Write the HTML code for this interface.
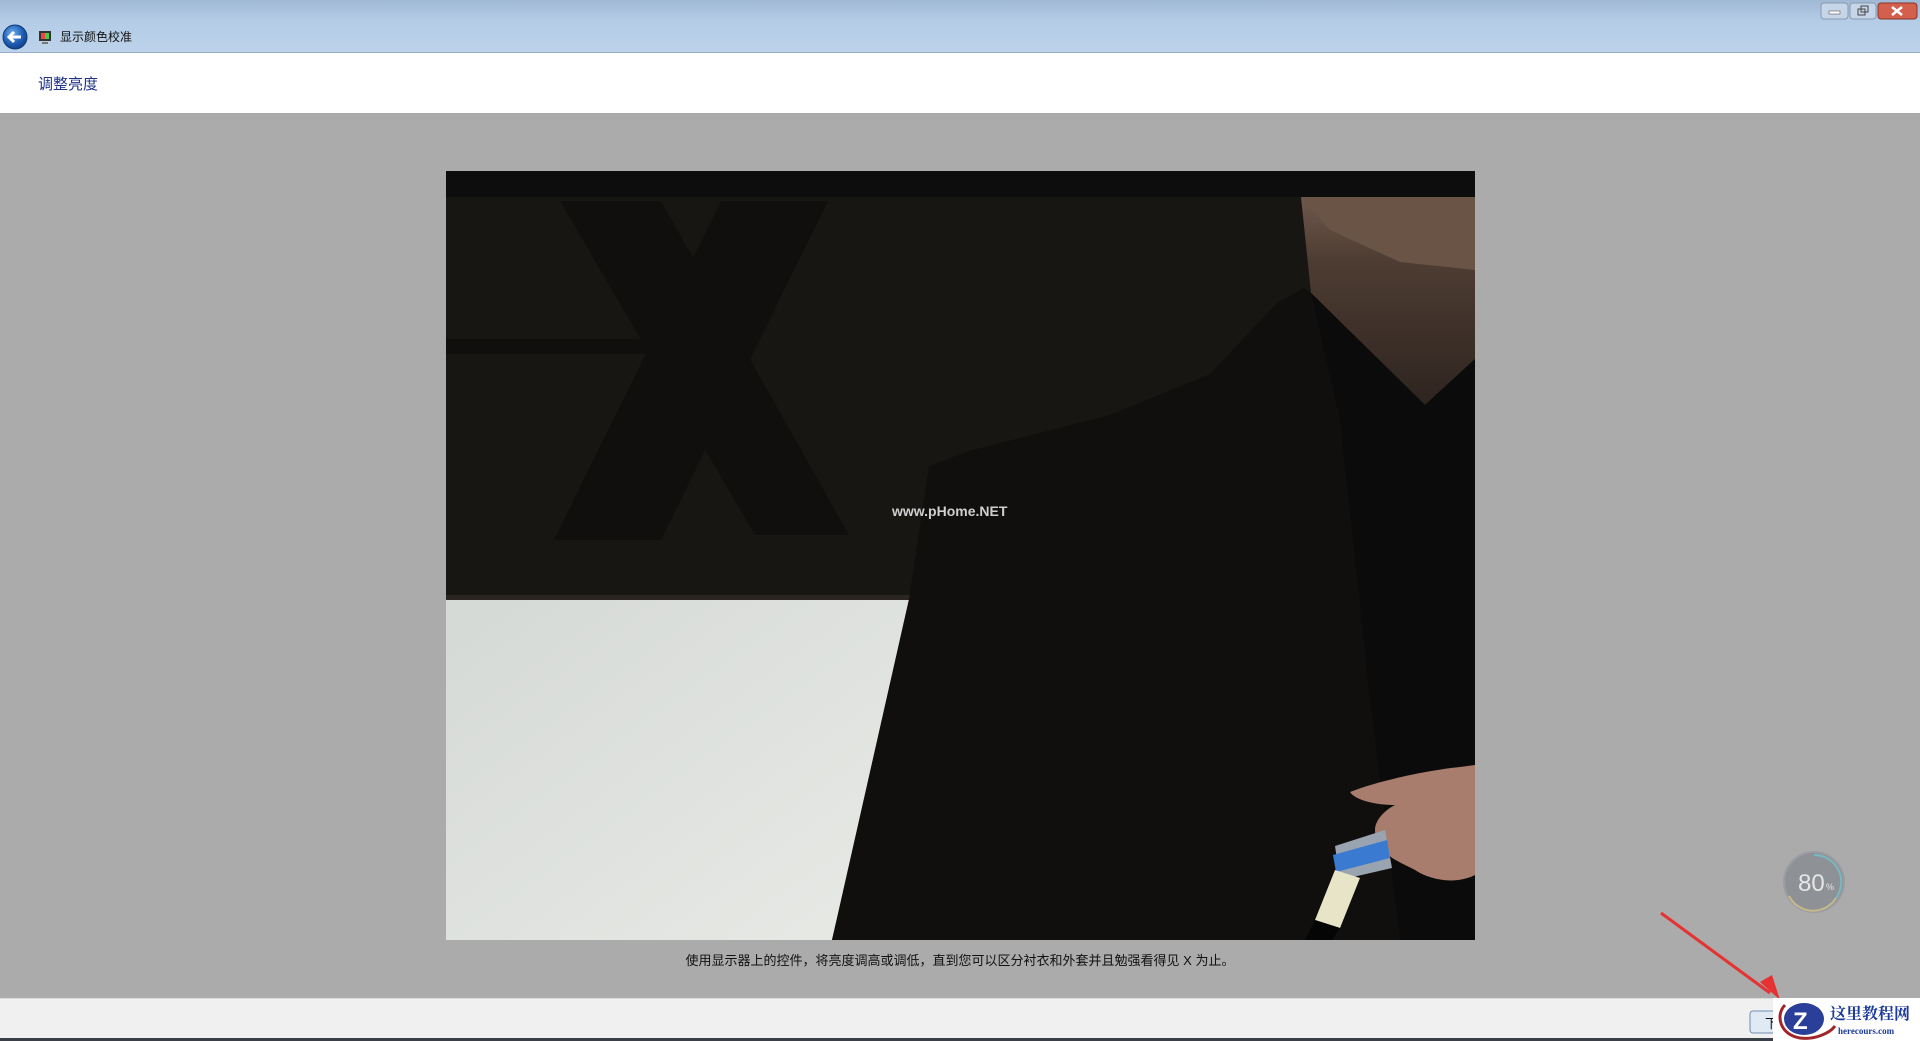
<!DOCTYPE html>
<html><head><meta charset="utf-8"><style>
*{margin:0;padding:0;box-sizing:border-box}
body{width:1920px;height:1041px;overflow:hidden;background:#ababab;font-family:"Liberation Sans","Noto Sans CJK SC",sans-serif;position:relative}
.tb{position:absolute;left:0;top:0;width:1920px;height:53px;background:linear-gradient(#9fb8d3,#b4cce6 40%,#bcd3ea);border-bottom:1px solid #98aec6}
.hd{position:absolute;left:0;top:53px;width:1920px;height:60px;background:#fff}
.bb{position:absolute;left:0;top:998px;width:1920px;height:43px;background:#f0f0f0;border-top:1px solid #dcdcdc;border-bottom:3px solid #3a3f48}
</style></head><body>
<div class="tb"></div>
<div class="hd"></div>
<div class="bb"></div>
<svg width="1920" height="1041" style="position:absolute;left:0;top:0">
<defs>
<radialGradient id="bk" cx="0.4" cy="0.35" r="0.7"><stop offset="0" stop-color="#6fb0ee"/><stop offset="0.6" stop-color="#1f5fb5"/><stop offset="1" stop-color="#123f86"/></radialGradient>
<linearGradient id="wall" x1="0" y1="0" x2="1" y2="1"><stop offset="0" stop-color="#d5d9d6"/><stop offset="1" stop-color="#e8eae6"/></linearGradient>
<linearGradient id="skin" x1="0" y1="0" x2="0" y2="1"><stop offset="0" stop-color="#6e584b"/><stop offset="0.3" stop-color="#4e3d33"/><stop offset="1" stop-color="#2e241f"/></linearGradient>
</defs>
<circle cx="15" cy="37" r="12" fill="url(#bk)" stroke="#0d3a7a"/>
<path d="M21 37H10M14 32l-5 5 5 5" stroke="#fff" stroke-width="3" fill="none"/>
<rect x="39" y="31" width="12" height="10" fill="#333"/><rect x="41" y="33" width="8" height="6" fill="#e44"/><rect x="45" y="33" width="4" height="6" fill="#4c4"/><rect x="42" y="42" width="6" height="2" fill="#777"/>
<text x="60" y="41" font-size="12" fill="#111">显示颜色校准</text>
<rect x="1821" y="3" width="27" height="16" rx="3" fill="#c6d6e8" stroke="#8799b0"/><rect x="1829" y="11" width="11" height="3" fill="#fff" stroke="#555" stroke-width=".6"/>
<rect x="1850" y="3" width="26" height="16" rx="3" fill="#c6d6e8" stroke="#8799b0"/><rect x="1858" y="9" width="7" height="6" fill="none" stroke="#444"/><rect x="1861" y="6" width="7" height="6" fill="none" stroke="#444"/>
<rect x="1878" y="3" width="39" height="16" rx="3" fill="#d2604c" stroke="#8a3326"/><path d="M1892 7l10 8M1902 7l-10 8" stroke="#fff" stroke-width="2.5"/>
<text x="38" y="89" font-size="15" fill="#1e3287">调整亮度</text>
<rect x="446" y="171" width="1029" height="769" fill="#181613"/>
<rect x="446" y="171" width="1029" height="26" fill="#0d0d0d"/>
<rect x="446" y="339" width="220" height="15" fill="#100f0e"/>
<polygon points="560,201 661,201 849,535 755,535" fill="#100f0e"/>
<polygon points="721,201 828,201 661,540 554,540" fill="#100f0e"/>
<rect x="446" y="595" width="470" height="6" fill="#2a2520"/>
<polygon points="446,600 912,600 832,940 446,940" fill="url(#wall)"/>
<polygon points="1301,197 1475,197 1475,359 1425,405 1311,293" fill="url(#skin)"/>
<polygon points="1301,197 1475,197 1475,270 1400,262 1330,230" fill="#6a5446"/>
<polygon points="909,599 929,466 969,451 1110,415 1210,374 1277,303 1304,288 1311,293 1425,405 1475,359 1475,940 832,940" fill="#100f0e"/>
<polygon points="1311,293 1425,405 1475,359 1475,940 1400,940 1370,700 1340,420" fill="#0c0b0b"/>
<path d="M1350 792c30-12 80-22 110-25l15-2v110c-20 10-45 5-60-5-20-10-40-18-40-40 0-10 10-20 20-25-20 0-40-5-45-13z" fill="#a87d6e"/>
<polygon points="1335,846 1385,830 1392,868 1340,880" fill="#9aa3b0"/>
<polygon points="1333,855 1387,840 1390,858 1336,872" fill="#3a7ad0"/>
<polygon points="1315,920 1335,870 1360,878 1340,928" fill="#e8e4c8"/>
<polygon points="1305,940 1315,920 1340,928 1332,940" fill="#050505"/>
<text x="892" y="516" font-size="14" font-weight="bold" fill="#cfcfcf">www.pHome.NET</text>
<text x="960" y="965" font-size="13" fill="#111" text-anchor="middle">使用显示器上的控件，将亮度调高或调低，直到您可以区分衬衣和外套并且勉强看得见 X 为止。</text>
<circle cx="1814" cy="882" r="30" fill="#8e9196" stroke="#9a9da2" stroke-width="2"/>
<path d="M1814 855a27 27 0 0 1 22 43" stroke="#7ab8c0" stroke-width="2" fill="none"/>
<path d="M1836 898a27 27 0 0 1-47-2" stroke="#c8b98a" stroke-width="2" fill="none"/>
<text x="1798" y="891" font-size="24" fill="#e6e6e6">80</text><text x="1826" y="890" font-size="9" fill="#e6e6e6">%</text>
<rect x="1750" y="1011" width="40" height="22" rx="3" fill="#dfeaf5" stroke="#6f8eb0"/>
<text x="1765" y="1028" font-size="13" fill="#111">下</text>
<line x1="1661" y1="913" x2="1770" y2="993" stroke="#e53333" stroke-width="3"/>
<polygon points="1780,1000 1760,982 1772,975" fill="#e53333"/>
<rect x="1773" y="998" width="147" height="43" fill="#fff"/>
<ellipse cx="1804" cy="1019" rx="20" ry="16" fill="#2a3f9a"/>
<text x="1793" y="1029" font-size="24" font-weight="bold" fill="#fff" font-family="Liberation Sans">Z</text>
<path d="M1785 1005c-10 10-5 30 15 33 15 2 30-5 35-12" stroke="#a0262a" stroke-width="3" fill="none"/>
<text x="1830" y="1019" font-size="16" font-weight="bold" fill="#1b3a9a" font-family="Liberation Serif,'Noto Serif CJK SC',serif">这里教程网</text>
<text x="1838" y="1034" font-size="9" font-weight="bold" fill="#1b3a9a" font-family="Liberation Serif,serif">herecours.com</text>
</svg>
</body></html>
